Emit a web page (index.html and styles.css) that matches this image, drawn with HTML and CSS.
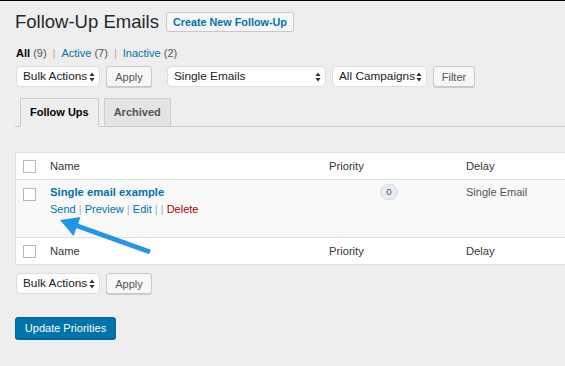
FILE: index.html
```html
<!DOCTYPE html>
<html lang="en">

<head>
    <meta charset="UTF-8">
    <meta name="viewport" content="width=device-width, initial-scale=1.0">
    <title>Follow-Up Emails</title>
    <link rel="stylesheet" href="styles.css">
</head>

<body>
    <div class="wrap">
        <div class="page-head">
            <h1>Follow-Up Emails</h1>
            <a class="title-action" href="#">Create New Follow-Up</a>
        </div>

        <ul class="subsubsub">
            <li><a class="current" href="#">All <span class="count">(9)</span></a></li>
            <li class="sep">|</li>
            <li><a href="#">Active <span class="count">(7)</span></a></li>
            <li class="sep">|</li>
            <li><a href="#">Inactive <span class="count">(2)</span></a></li>
        </ul>

        <div class="tablenav">
            <span class="select w-bulk">Bulk Actions
                <svg class="arrows" width="6" height="10" viewBox="0 0 6 10"><path d="M3 0.5L5.6 4H0.4z M3 9.5L5.6 6H0.4z" fill="#333"/></svg>
            </span>
            <button class="button w-apply">Apply</button>
            <span class="select w-single spaced">Single Emails
                <svg class="arrows" width="6" height="10" viewBox="0 0 6 10"><path d="M3 0.5L5.6 4H0.4z M3 9.5L5.6 6H0.4z" fill="#333"/></svg>
            </span>
            <span class="select w-camp">All Campaigns
                <svg class="arrows" width="6" height="10" viewBox="0 0 6 10"><path d="M3 0.5L5.6 4H0.4z M3 9.5L5.6 6H0.4z" fill="#333"/></svg>
            </span>
            <button class="button w-filter">Filter</button>
        </div>

        <div class="nav-tabs">
            <a class="nav-tab active" href="#">Follow Ups</a>
            <a class="nav-tab" href="#">Archived</a>
        </div>

        <div class="list-table">
            <div class="row head">
                <div class="cb"><span class="checkbox"></span></div>
                <div>Name</div>
                <div>Priority</div>
                <div>Delay</div>
            </div>
            <div class="row item">
                <div class="cb"><span class="checkbox"></span></div>
                <div>
                    <a class="row-title" href="#">Single email example</a>
                    <div class="row-actions">
                        <a href="#">Send</a> | <a href="#">Preview</a> | <a href="#">Edit</a> | | <a class="delete" href="#">Delete</a>
                    </div>
                </div>
                <div class="priority"><span class="badge">0</span></div>
                <div class="delay">Single Email</div>
            </div>
            <div class="row foot">
                <div class="cb"><span class="checkbox"></span></div>
                <div>Name</div>
                <div>Priority</div>
                <div>Delay</div>
            </div>
        </div>

        <div class="tablenav bottom">
            <span class="select w-bulk">Bulk Actions
                <svg class="arrows" width="6" height="10" viewBox="0 0 6 10"><path d="M3 0.5L5.6 4H0.4z M3 9.5L5.6 6H0.4z" fill="#333"/></svg>
            </span>
            <button class="button w-apply">Apply</button>
        </div>

        <button class="button-primary">Update Priorities</button>
    </div>

    <!-- callout arrow pointing at "Send" -->
    <svg class="callout" width="565" height="366" viewBox="0 0 565 366">
        <line x1="150" y1="252" x2="72" y2="224" stroke="#2196e6" stroke-width="5"/>
        <polygon points="60,220 73.5,236 80.5,217" fill="#2196e6"/>
    </svg>
</body>

</html>
```

FILE: styles.css
```css
html,
body {
    margin: 0;
    height: 100%;
    overflow: hidden;
}

body {
    position: relative;
    border-top: 1px solid #000;
    box-sizing: border-box;
    background: #eeeeee;
    font-family: "Liberation Sans", Arial, sans-serif;
    font-size: 11px;
    color: #32373c;
}

a {
    text-decoration: none;
    color: #0073aa;
}

.wrap {
    padding-left: 15px;
}

.page-head {
    display: flex;
    align-items: flex-start;
    gap: 7px;
    margin-top: 9px;
    height: 24px;
}

h1 {
    margin: 0;
    font-size: 18.5px;
    font-weight: 400;
    line-height: 24px;
    color: #23282d;
}

.title-action {
    margin-top: 2px;
    height: 20px;
    line-height: 18px;
    box-sizing: border-box;
    padding: 0 6px;
    border: 1px solid #c8c8c8;
    border-radius: 2px;
    background: #f7f7f7;
    font-weight: 700;
    font-size: 10.8px;
}

.subsubsub {
    list-style: none;
    margin: 11px 0 0 1px;
    padding: 0;
    display: flex;
    gap: 6px;
    line-height: 16px;
    color: #aaa;
}

.subsubsub a .count {
    color: #555;
}

.subsubsub a.current {
    color: #000;
    font-weight: 700;
}

.subsubsub a.current .count {
    font-weight: 400;
}

.tablenav {
    display: flex;
    align-items: flex-start;
    gap: 6px;
    margin-top: 5px;
    margin-left: 1px;
    height: 22px;
}

.tablenav.bottom {
    margin-top: 8px;
}

.select {
    position: relative;
    box-sizing: border-box;
    height: 21px;
    line-height: 19px;
    padding: 0 6px;
    border: 1px solid #dcdcdc;
    border-radius: 5px;
    background: #fff;
    font-size: 11.8px;
    color: #222;
}

.select .arrows {
    position: absolute;
    right: 4px;
    top: 5px;
}

.spaced {
    margin-left: 9px;
}

.w-bulk {
    width: 84px;
}

.w-single {
    width: 159px;
}

.w-camp {
    width: 95px;
}

.button {
    box-sizing: border-box;
    height: 21px;
    padding: 0;
    border: 1px solid #c9c9c9;
    border-radius: 3px;
    background: #f7f7f7;
    box-shadow: 0 1px 0 #cccccc;
    font-family: inherit;
    font-size: 11px;
    color: #555;
}

.w-apply {
    width: 46px;
}

.w-filter {
    width: 42px;
}

.nav-tabs {
    display: flex;
    gap: 5px;
    margin-top: 10px;
    padding-left: 5px;
    border-bottom: 1px solid #cccccc;
    height: 28px;
}

.nav-tab {
    box-sizing: border-box;
    height: 29px;
    line-height: 27px;
    padding: 0 9px;
    border: 1px solid #cccccc;
    background: #e4e4e4;
    font-weight: 700;
    white-space: nowrap;
    color: #555;
}

.nav-tab.active {
    background: #eeeeee;
    border-bottom-color: #eeeeee;
    color: #000;
}

.list-table {
    margin-top: 25px;
    background: #fff;
    border: 1px solid #e1e1e1;
    border-right: 0;
}

.row {
    display: grid;
    grid-template-columns: 34px 279px 137px 1fr;
}

.row.head,
.row.foot {
    height: 26px;
    align-items: center;
    font-size: 11.2px;
}

.row.head {
    border-bottom: 1px solid #e1e1e1;
}

.row.foot {
    border-top: 1px solid #e1e1e1;
}

.row.item {
    height: 57px;
    background: #f9f9f9;
    align-items: start;
}

.cb {
    padding-left: 7px;
}

.checkbox {
    display: block;
    width: 13px;
    height: 13px;
    box-sizing: border-box;
    border: 1px solid #b4b9be;
    background: #fff;
}

.item .cb {
    padding-top: 8px;
}

.row-title {
    display: block;
    margin-top: 5px;
    font-size: 11.3px;
    font-weight: 700;
    line-height: 15px;
}

.row-actions {
    margin-top: 2px;
    line-height: 15px;
    color: #aaa;
}

.row-actions .delete {
    color: #a00;
}

.priority {
    padding-top: 4px;
    padding-left: 51px;
}

.badge {
    display: inline-block;
    box-sizing: border-box;
    width: 18px;
    height: 16px;
    line-height: 14px;
    text-align: center;
    border: 1px solid #d6dde4;
    border-radius: 8px;
    background: #e7edf3;
    font-size: 9.5px;
    color: #555;
}

.delay {
    padding-top: 6px;
    color: #555;
}

.button-primary {
    margin-top: 22px;
    box-sizing: border-box;
    width: 101px;
    height: 22px;
    padding: 0;
    border: 1px solid #006799;
    border-radius: 3px;
    background: #0073aa;
    box-shadow: 0 1px 0 #006799;
    font-family: inherit;
    font-size: 11px;
    color: #fff;
}

.callout {
    position: absolute;
    left: 0;
    top: -1px;
    pointer-events: none;
}
```
